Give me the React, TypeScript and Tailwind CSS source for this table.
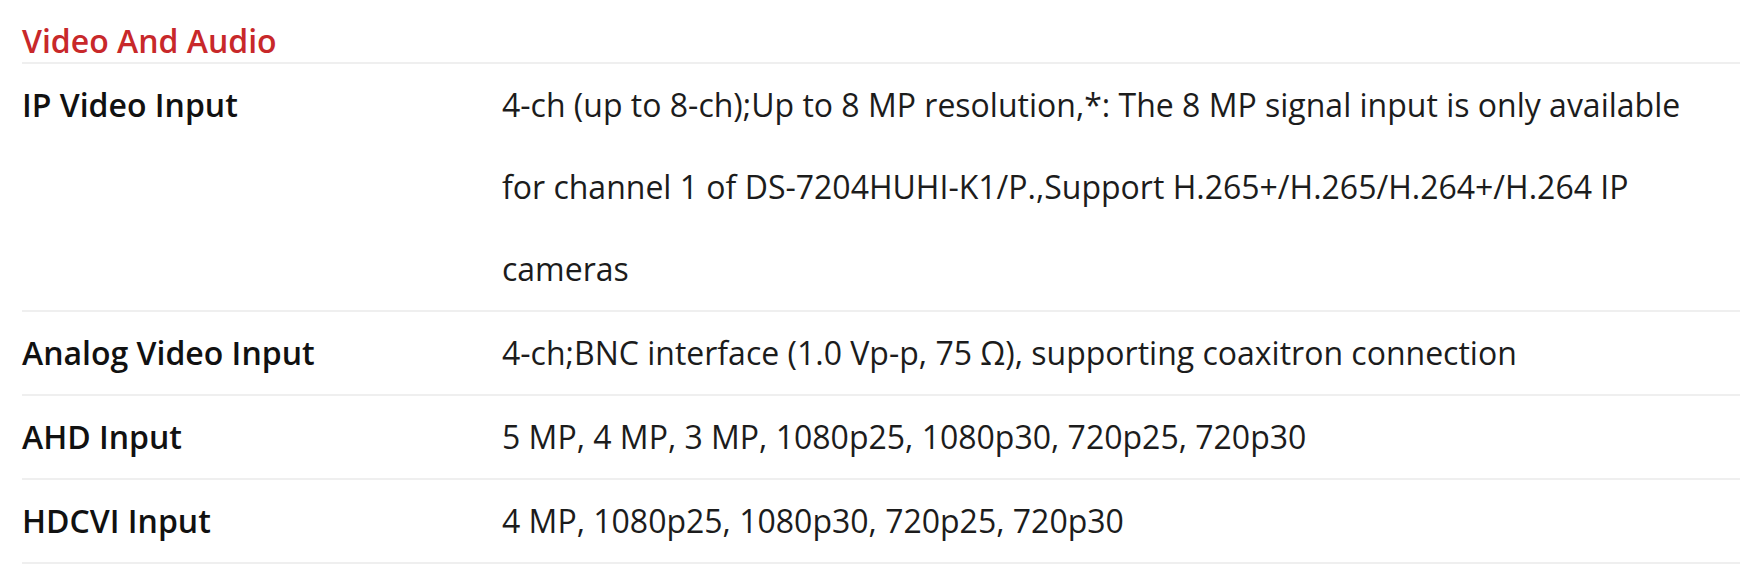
import React from "react";

interface SpecRow {
  label: string;
  value: string;
}

const VIDEO_AUDIO_ROWS: SpecRow[] = [
  {
    label: "IP Video Input",
    value:
      "4-ch (up to 8-ch);Up to 8 MP resolution,*: The 8 MP signal input is only available for channel 1 of DS-7204HUHI-K1/P.,Support H.265+/H.265/H.264+/H.264 IP cameras",
  },
  {
    label: "Analog Video Input",
    value: "4-ch;BNC interface (1.0 Vp-p, 75 Ω), supporting coaxitron connection",
  },
  {
    label: "AHD Input",
    value: "5 MP, 4 MP, 3 MP, 1080p25, 1080p30, 720p25, 720p30",
  },
  {
    label: "HDCVI Input",
    value: "4 MP, 1080p25, 1080p30, 720p25, 720p30",
  },
];

function SpecLine({ label, value }: SpecRow) {
  return (
    <div className="grid grid-cols-[480px_1fr] border-b-2 border-[#efefef] leading-[82px]">
      <div className="font-semibold text-[#111]">{label}</div>
      <div className="pr-[22px] text-[#1c1c1c]">{value}</div>
    </div>
  );
}

export default function App() {
  return (
    <div className="min-h-[568px] bg-white pl-[22px] font-['Open_Sans',sans-serif] text-[32px]">
      <h3 className="border-b-2 border-[#efefef] pt-[21px] pb-[1px] font-semibold leading-[40px] text-[#c8282a]">
        Video And Audio
      </h3>
      {VIDEO_AUDIO_ROWS.map((row) => (
        <SpecLine key={row.label} label={row.label} value={row.value} />
      ))}
    </div>
  );
}
